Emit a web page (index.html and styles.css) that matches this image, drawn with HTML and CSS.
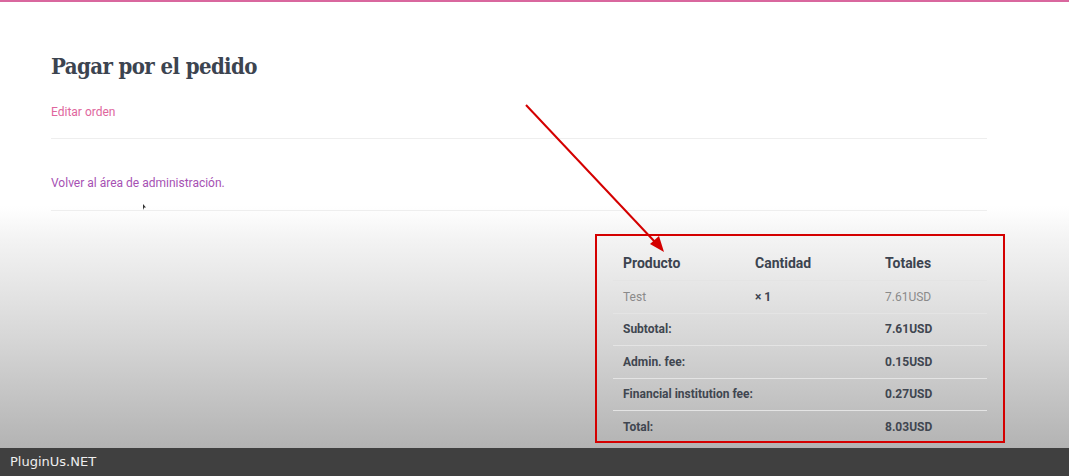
FILE: index.html
```html
<!DOCTYPE html>
<html lang="es">
<head>
<meta charset="utf-8">
<title>Pagar por el pedido</title>
<link rel="stylesheet" href="styles.css">
</head>
<body>
<div class="page">
  <main class="content">
    <h1 class="title">Pagar por el pedido</h1>
    <div class="section section-edit">
      <a class="edit-link" href="#">Editar orden</a>
    </div>
    <div class="section section-admin">
      <a class="admin-link" href="#">Volver al área de administración.</a>
    </div>
    <div class="order">
      <table class="order-table">
        <thead>
          <tr><th class="c1">Producto</th><th class="c2">Cantidad</th><th class="c3">Totales</th></tr>
        </thead>
        <tbody>
          <tr class="item"><td class="c1">Test</td><td class="c2 qty">× 1</td><td class="c3">7.61USD</td></tr>
        </tbody>
        <tfoot>
          <tr><th colspan="2">Subtotal:</th><td>7.61USD</td></tr>
          <tr><th colspan="2">Admin. fee:</th><td>0.15USD</td></tr>
          <tr><th colspan="2">Financial institution fee:</th><td>0.27USD</td></tr>
          <tr><th colspan="2">Total:</th><td>8.03USD</td></tr>
        </tfoot>
      </table>
    </div>
  </main>
  <div class="highlight-box"></div>
  <svg class="arrow" width="1069" height="476" viewBox="0 0 1069 476">
    <line x1="526" y1="105" x2="655" y2="242" stroke="#d40000" stroke-width="2"/>
    <polygon points="664,252 650,244 659,236" fill="#d40000"/>
  </svg>
  <div class="cursor"></div>
</div>
<footer class="watermark">PluginUs.NET</footer>
</body>
</html>
```

FILE: styles.css
```css
html, body {
  margin: 0;
  padding: 0;
}
body {
  width: 1069px;
  height: 476px;
  overflow: hidden;
  font-family: Roboto, "Liberation Sans", sans-serif;
  background: linear-gradient(to bottom, #ffffff 0px, #ffffff 206px, #f3f3f3 240px, #d6d6d6 340px, #b3b3b3 448px);
  position: relative;
}
.page {
  border-top: 2px solid #d9679e;
  height: 446px;
}
.content {
  padding: 0 82px 0 51px;
}
.title {
  margin: 0;
  padding-top: 50px;
  font-family: "DejaVu Serif Condensed", "DejaVu Serif", serif;
  font-stretch: condensed;
  font-weight: bold;
  font-size: 22px;
  line-height: 28px;
  color: #3c4450;
  letter-spacing: -0.6px;
}
.section {
  border-bottom: 1px solid #eeeeee;
}
.section-edit {
  padding: 24px 0 18px;
}
.section-admin {
  padding: 36px 0 19px;
}
.edit-link, .admin-link {
  display: block;
  font-size: 12px;
  line-height: 16px;
  text-decoration: none;
}
.edit-link { color: #e0669d; }
.admin-link { color: #a651b3; }
.order {
  display: flex;
  justify-content: flex-end;
  padding-top: 34px;
}
.order-table {
  width: 374px;
  border-collapse: collapse;
  color: #3c4450;
}
.order-table th, .order-table td {
  text-align: left;
  padding: 0 0 0 10px;
  border-bottom: 1px solid #e4e4e4;
  font-size: 12px;
  height: 31.5px;
}
.order-table thead th {
  font-size: 14px;
  font-weight: bold;
  height: 35px;
}
.order-table .c1 { width: 122px; }
.order-table .c2 { width: 120px; }
.order-table .item td { color: #8a8a8a; }
.order-table .item td.qty { color: #3c4450; font-weight: bold; }
.order-table tfoot th, .order-table tfoot td { font-weight: bold; color: #404650; }
.order-table tfoot tr:last-child th, .order-table tfoot tr:last-child td { border-bottom: none; }
.highlight-box {
  position: absolute;
  left: 595px;
  top: 234px;
  width: 406px;
  height: 205px;
  border: 2px solid #d40000;
}
.arrow {
  position: absolute;
  left: 0;
  top: 0;
}
.cursor {
  position: absolute;
  left: 143px;
  top: 204px;
  width: 3px;
  height: 6px;
  background: #333;
  clip-path: polygon(0 0, 100% 60%, 40% 60%, 0 100%);
}
.watermark {
  position: absolute;
  left: 0;
  right: 0;
  bottom: 0;
  height: 28px;
  background: #404040;
  color: #eeeeee;
  font-family: "DejaVu Sans", sans-serif;
  font-size: 13px;
  line-height: 28px;
  padding-left: 10px;
}
```
